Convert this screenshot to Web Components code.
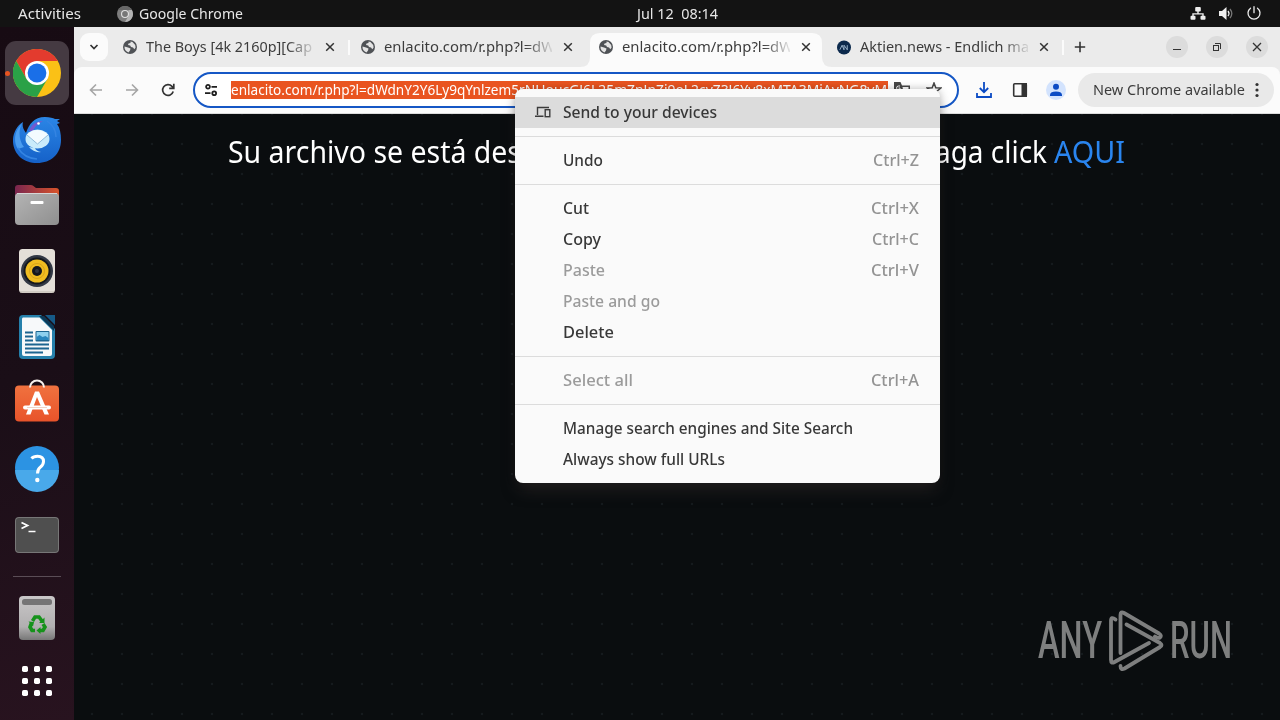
<!DOCTYPE html>
<html lang="en">
<head>
<meta charset="utf-8">
<title>Desktop</title>
<style>
  body {
    margin: 0;
    width: 1280px;
    height: 720px;
    overflow: hidden;
    font-family: "Noto Sans", "Open Sans", sans-serif;
    background: #131313;
  }
</style>
</head>
<body>
<desk-top></desk-top>

<script>
// one line of text, squeezed or stretched to the width in "w"
customElements.define(
  "fit-text",
  class extends HTMLElement {
    constructor() {
      super();
      this.attachShadow({ mode: "open" });
      // whitespace is kept by "pre", so no line breaks around the span
      this.shadowRoot.innerHTML =
        `<style>
        :host { display: block; flex: none; }
        span { display: inline-block; white-space: pre; transform-origin: 0 50%; vertical-align: top; }
        </style><span><slot></slot></span>`;
    }
    connectedCallback() {
      const w = Number(this.getAttribute("w"));
      const span = this.shadowRoot.querySelector("span");
      this.style.width = w + "px";
      const natural = span.getBoundingClientRect().width;
      if (natural) span.style.transform = `scaleX(${w / natural})`;
    }
  }
);

customElements.define(
  "top-bar",
  class extends HTMLElement {
    constructor() {
      super();
      this.attachShadow({ mode: "open" });
      this.shadowRoot.innerHTML = `
      <style>
        :host {
          display: flex;
          align-items: center;
          height: 27px;
          background: #131313;
          color: #e6e6e6;
          font-size: 14.3px;
          box-sizing: border-box;
          padding: 0 18px;
        }
        .app { display: flex; align-items: center; gap: 6px; margin-left: 36px; }
        .clock { margin-left: 394px; }
        .status { display: flex; align-items: center; gap: 12px; margin-left: auto; }
        svg { display: block; }
      </style>
      <fit-text w="63">Activities</fit-text>
      <div class="app">
        <svg width="16" height="16" viewBox="0 0 16 16">
          <circle cx="8" cy="8" r="8" fill="#7d7d7d"/>
          <path d="M1.1 4A8 8 0 0 1 14.9 4H8z" fill="#666"/>
          <path d="M14.9 4A8 8 0 0 1 8 16l3.5-6V4z" fill="#b4b4b4"/>
          <circle cx="8" cy="8" r="4" fill="#e2e2e2"/>
          <circle cx="8" cy="8" r="2.9" fill="#777"/>
        </svg>
        <fit-text w="104">Google Chrome</fit-text>
      </div>
      <fit-text class="clock" w="81">Jul 12  08:14</fit-text>
      <div class="status">
        <svg width="16" height="16" viewBox="0 0 16 16" fill="#eee">
          <rect x="5.2" y="1" width="5.6" height="4.500" rx="1"/>
          <rect x="0.5" y="9.700" width="5" height="4" rx="1"/>
          <rect x="10.5" y="9.700" width="5" height="4" rx="1"/>
          <path d="M7.3 5h1.4v2.2H13.700v2.700h-1.400V8.500H3.700v1.400H2.300V7.200h5z"/>
        </svg>
        <svg width="16" height="16" viewBox="0 0 16 16" fill="#eee">
          <path d="M1 5h3L8.500 1v13L4 10H1z"/>
          <path d="M10 5q2 2.500 0 5" stroke="#eee" stroke-width="1.300" fill="none"/>
          <path d="M12 3q3.600 4.500 0 9" stroke="#777" stroke-width="1.300" fill="none"/>
        </svg>
        <svg width="16" height="16" viewBox="0 0 16 16" fill="none" stroke="#eee" stroke-width="1.300" stroke-linecap="round">
          <path d="M4.500 2.200a6 6 0 1 0 7 0M8 .7v6"/>
        </svg>
      </div>`;
    }
  }
);

customElements.define(
  "dock-item",
  class extends HTMLElement {
    constructor() {
      super();
      this.attachShadow({ mode: "open" });
      this.shadowRoot.innerHTML = `
      <style>
        :host { display: flex; flex: none; align-items: center; justify-content: center; height: 66px; width: 74px; }
        div { display: flex; align-items: center; justify-content: center; width: 64px; height: 64px; border-radius: 11px; }
        :host([active]) div { background: #453a42; }
        :host([active]) div::before {
          content: "";
          width: 5px; height: 5px;
          border-radius: 50%;
          background: #e95420;
          margin: 0 3px 0 -8px;
        }
        ::slotted(svg) { display: block; width: 48px; height: 48px; flex: none; }
      </style>
      <div><slot></slot></div>`;
    }
  }
);

customElements.define(
  "side-dock",
  class extends HTMLElement {
    constructor() {
      super();
      this.attachShadow({ mode: "open" });
      this.shadowRoot.innerHTML = `
      <style>
        :host {
          display: flex;
          flex-direction: column;
          width: 74px;
          box-sizing: border-box;
          padding-top: 13px;
          background: linear-gradient(165deg, #170b13 0%, #1a0e17 50%, #28131f 100%);
        }
        hr { width: 48px; height: 1px; border: 0; margin: 8px auto; background: #5a4d56; flex: none; }
        .apps { height: 60px; }
      </style>
      <dock-item active><svg viewBox="0 0 48 48">
        <circle cx="24" cy="24" r="24" fill="#fbc116"/>
        <path d="M3.200 12A24 24 0 0 1 44.800 12H24L13.600 30z" fill="#e33b2e"/>
        <path d="M3.200 12A24 24 0 0 0 24 48L34.400 30 24 36 13.600 30z" fill="#2aa147"/>
        <circle cx="24" cy="24" r="12" fill="#fff"/>
        <circle cx="24" cy="24" r="9.400" fill="#1a6fe8"/>
      </svg></dock-item>
      <dock-item><svg viewBox="0 0 48 48">
        <defs>
          <linearGradient id="tb" x1="0" y1="0" x2="0" y2="1"><stop offset="0" stop-color="#2b86e6"/><stop offset="1" stop-color="#1561c8"/></linearGradient>
        </defs>
        <path d="M10 7C9 11 10 14 13 18 16 9 21 2 32 2c5 0 8 1 10 2h5l-3 2 3 2-3 1c3 4 4 10 4 16 0 14-10 23-24 23C11 48 1 40 0 27-.5 20 3 11 10 7z" fill="url(#tb)"/>
        <path d="M9 9C5 15 6 26 11 32L5 34C-1 25 3 14 9 9z" fill="#4b9df0"/>
        <path d="M16 16c2-6 7-10 14-10-5 3-8 5-10 10z" fill="#7459cf"/>
        <circle cx="25.500" cy="8.500" r="1.300" fill="#fff"/>
        <ellipse cx="24.500" cy="24" rx="12" ry="9.500" fill="#c9ebfb"/>
        <path d="M13.500 20Q24 10 35.500 20L24.500 29z" fill="#f3fbff"/>
        <path d="M14 20l10.500 9L35 20" fill="none" stroke="#8fbbda" stroke-width="1"/>
        <path d="M16 32q5 6 12 5-5-1-6-4z" fill="#bfe7fb"/>
        <path d="M34 6q9 6 9 16M5 33q6 10 19 11" stroke="#3484e2" stroke-width="1.500" fill="none"/>
      </svg></dock-item>
      <dock-item><svg viewBox="0 0 48 48">
        <defs>
          <linearGradient id="fo"><stop offset="0" stop-color="#79264f"/><stop offset="1" stop-color="#d9542b"/></linearGradient>
          <linearGradient id="fg" x1="0" y1="0" x2="1" y2="1"><stop offset="0" stop-color="#b4b4b4"/><stop offset="1" stop-color="#8f8f8f"/></linearGradient>
        </defs>
        <path d="M2 14V7q0-3 3-3h13q2 0 3 1.500L23 7h20q3 0 3 3v8H2z" fill="url(#fo)"/>
        <rect x="2" y="12" width="44" height="32" rx="4" fill="url(#fg)"/>
        <path d="M4 12.500h40" stroke="#d6d6d6" stroke-width="1"/>
        <rect x="17.500" y="20" width="13" height="3" rx="1" fill="#fff"/>
      </svg></dock-item>
      <dock-item><svg viewBox="0 0 48 48">
        <rect x="6" y="2" width="36" height="44" rx="3.500" fill="#e4dfd8"/>
        <path d="M7 45h34" stroke="#bdb7ae"/>
        <circle cx="24" cy="24" r="16" fill="#323844"/>
        <circle cx="24" cy="24" r="13.500" fill="#15181d"/>
        <circle cx="24" cy="24" r="11.500" fill="#f0bd20"/>
        <circle cx="24" cy="24" r="7.500" fill="none" stroke="#d9a51a"/>
        <circle cx="24" cy="24" r="5" fill="#15181d"/>
        <circle cx="24" cy="24" r="2" fill="#30353f"/>
      </svg></dock-item>
      <dock-item><svg viewBox="0 0 48 48">
        <path d="M10 2h18l14 14v26q0 4-4 4H10q-4 0-4-4V6q0-4 4-4z" fill="#2580ab"/>
        <path d="M32 2h10v10z" fill="#165a87"/>
        <path d="M10 4.500h16.500L39 17v24q0 2-2 2H11q-2 0-2-2V6.500q0-2 1-2z" fill="#f7f9fa"/>
        <path d="M26 3l15 15V13L31 3z" fill="#0c3a58"/>
        <path d="M12 19.500h8M12 23.500h8M12 27.500h8M12 31.500h24M12 35.500h24M12 39.500h18" stroke="#1c6590" stroke-width="1.800"/>
        <rect x="22.500" y="18" width="14" height="10.500" rx="1" fill="#1c6590"/>
        <path d="M23.500 19h12v8h-12z" fill="#8ed0ee"/>
        <path d="M23.500 27v-3l3-2 3 2 3-1 3 2v2z" fill="#2a86bd"/>
      </svg></dock-item>
      <dock-item><svg viewBox="0 0 48 48">
        <defs><linearGradient id="ba" x1="0" y1="0" x2="0" y2="1"><stop offset="0" stop-color="#f0723f"/><stop offset="1" stop-color="#e8532a"/></linearGradient></defs>
        <rect x="2" y="6.500" width="44" height="36" rx="4" fill="url(#ba)"/>
        <path d="M17 8.500a7 7 0 0 1 14 0" fill="none" stroke="#f5f0ec" stroke-width="2"/>
        <path d="M13 35.500L22 12.500h4L36 35.500h-4.500L24 18l-6.500 17.500z" fill="#fff"/>
        <rect x="10" y="26.500" width="28" height="4" rx="2" fill="#fff"/>
        <path d="M14 28.500h20" stroke="#e8b59f" stroke-width=".6"/>
      </svg></dock-item>
      <dock-item><svg viewBox="0 0 48 48">
        <circle cx="24" cy="23" r="22" fill="#2c93e3"/>
        <path d="M2 25a22 22 0 0 0 44 0z" fill="#49a9ea"/>
        <path d="M18.500 13.500q2-2.200 6-2.200 6 0 6 5.200 0 3-3 5.500-3 2-3 6.500" fill="none" stroke="#fff" stroke-width="3"/>
        <circle cx="24.300" cy="35" r="2.200" fill="#fff"/>
      </svg></dock-item>
      <dock-item><svg viewBox="0 0 48 48">
        <rect x="2" y="6" width="44" height="36" rx="4" fill="#777"/>
        <rect x="3" y="7" width="42" height="34" rx="3" fill="#4f4f4f"/>
        <path d="M8.500 11.500l6 3-6 3" fill="none" stroke="#fff" stroke-width="1.800"/>
        <path d="M15.500 20.500h7" stroke="#fff" stroke-width="1.500"/>
      </svg></dock-item>
      <hr>
      <dock-item><svg viewBox="0 0 48 48">
        <defs><linearGradient id="tr" x1="0" y1="0" x2="0" y2="1"><stop offset="0" stop-color="#c9c7c8"/><stop offset=".7" stop-color="#b1afb0"/><stop offset="1" stop-color="#777"/></linearGradient></defs>
        <rect x="6" y="2" width="36" height="44" rx="4" fill="url(#tr)"/>
        <rect x="9" y="5" width="30" height="6" rx="2.500" fill="#757475"/>
        <g fill="none" stroke="#16921b" stroke-width="3.600">
          <path d="M19.500 27l2.500-4h4l3 4"/>
          <path d="M18.500 29L17 33l2 3.500h3"/>
          <path d="M30 30l2 3-2 3.500h-4"/>
        </g>
        <path d="M31.500 23.500v5.500h-5.500zM15.500 27.500l5.500 .5-1 4.500zM27.500 33v7L23.500 36.500z" fill="#16921b"/>
      </svg></dock-item>
      <dock-item class="apps"><svg viewBox="0 0 48 48" fill="#fff">
        <rect x="9" y="9" width="6" height="6" rx="1.700"/><rect x="21" y="9" width="6" height="6" rx="1.700"/><rect x="33" y="9" width="6" height="6" rx="1.700"/>
        <rect x="9" y="21" width="6" height="6" rx="1.700"/><rect x="21" y="21" width="6" height="6" rx="1.700"/><rect x="33" y="21" width="6" height="6" rx="1.700"/>
        <rect x="9" y="33" width="6" height="6" rx="1.700"/><rect x="21" y="33" width="6" height="6" rx="1.700"/><rect x="33" y="33" width="6" height="6" rx="1.700"/>
      </svg></dock-item>`;
    }
  }
);

const GLOBE = `<svg width="14" height="14" viewBox="0 0 14 14">
  <circle cx="7" cy="7" r="7" fill="#4f5256"/>
  <path d="M1.500 6.500L5 7.500l2.500 1-.5 2-1.500 2C3 11.500 1.200 9.500 1.500 6.500z" fill="#e4e4e4"/>
  <path d="M7.500 1.400L9.500 2l2.700 3 .4 2.500-1.300 1.800-1.300-1.800-2-.5-.8-1.500L5 5l.5-1.500 2-.6z" fill="#e4e4e4"/>
</svg>`;

const NEWS = `<svg width="15" height="15" viewBox="0 0 15 15">
  <circle cx="7.500" cy="7.500" r="7.500" fill="#0c2a4d"/>
  <path d="M3 10l2.500-5L7.500 10V5l3.500 5V5" fill="none" stroke="#9fb8d0" stroke-width="1"/>
</svg>`;

customElements.define(
  "browser-tab",
  class extends HTMLElement {
    constructor() {
      super();
      this.attachShadow({ mode: "open" });
      this.shadowRoot.innerHTML = `
      <style>
        :host {
          display: flex;
          flex: none;
          align-items: center;
          position: relative;
          width: 238px;
          height: 40px;
          padding-left: 9px;
          box-sizing: border-box;
          color: #3c3c3c;
          font-size: 14.3px;
        }
        .back { display: none; }
        :host([active]) .back {
          display: block;
          position: absolute;
          left: -10px; top: 6px;
          z-index: 0;
        }
        .icon { width: 14px; height: 15px; display: flex; align-items: center; justify-content: center; flex: none; position: relative; }
        .title {
          position: relative;
          width: 168px;
          margin: -1px 0 0 9px;
          overflow: hidden;
          flex: none;
          -webkit-mask-image: linear-gradient(90deg, #000 84%, transparent 102%);
          mask-image: linear-gradient(90deg, #000 84%, transparent 102%);
        }
        .close { margin-left: 11px; position: relative; flex: none; }
        .rule { width: 2px; height: 15px; background: #fbfbfb; margin-left: 13px; }
        :host([norule]) .rule, :host([active]) .rule { visibility: hidden; }
      </style>
      <svg class="back" width="252" height="34" viewBox="0 0 252 34">
        <path d="M0 34Q10 34 10 24V10Q10 0 20 0H232Q242 0 242 10V24Q242 34 252 34z" fill="#fbfbfb"/>
      </svg>
      <div class="icon">${this.getAttribute("icon") == "news" ? NEWS : GLOBE}</div>
      <div class="title"><fit-text w="${this.getAttribute("w")}">${this.getAttribute("label")}</fit-text></div>
      <svg class="close" width="10" height="10" viewBox="0 0 10 10" stroke="#333" stroke-width="1.500"><path d="M1.200 1.200l7.600 7.600M8.800 1.200L1.200 8.800"/></svg>
      <div class="rule"></div>`;
    }
  }
);

customElements.define(
  "tab-strip",
  class extends HTMLElement {
    constructor() {
      super();
      this.attachShadow({ mode: "open" });
      this.shadowRoot.innerHTML = `
      <style>
        :host { display: flex; align-items: center; height: 40px; background: #ebebeb; box-sizing: border-box; padding: 0 12px 0 6px; }
        .search { width: 28px; height: 28px; margin-right: 6px; border-radius: 9px; background: #fbfbfb; display: flex; align-items: center; justify-content: center; flex: none; }
        .plus { flex: none; margin-left: 8px; }
        .win { display: flex; gap: 18px; margin-left: auto; }
        .win div { width: 22px; height: 22px; border-radius: 50%; background: #dcdcdc; display: flex; align-items: center; justify-content: center; }
        svg { display: block; }
      </style>
      <div class="search"><svg width="10" height="6" viewBox="0 0 10 6" fill="none" stroke="#333" stroke-width="1.700"><path d="M1.500 1L5 4.500 8.500 1"/></svg></div>
      <browser-tab label="The Boys [4k 2160p][Cap" w="166"></browser-tab>
      <browser-tab label="enlacito.com/r.php?l=dW" w="171" norule></browser-tab>
      <browser-tab label="enlacito.com/r.php?l=dW" w="171" active></browser-tab>
      <browser-tab label="Aktien.news - Endlich ma" w="169" icon="news"></browser-tab>
      <svg class="plus" width="12" height="12" viewBox="0 0 12 12" stroke="#333" stroke-width="1.600"><path d="M6 .8v10.400M.8 6h10.400"/></svg>
      <div class="win">
        <div><svg width="10" height="10" viewBox="0 0 10 10" stroke="#333" stroke-width="1"><path d="M1 7.500h8"/></svg></div>
        <div><svg width="10" height="10" viewBox="0 0 10 10" fill="none" stroke="#333" stroke-width="1"><rect x="1.500" y="3.500" width="5" height="5"/><path d="M3 1.500h5.500V7"/></svg></div>
        <div><svg width="10" height="10" viewBox="0 0 10 10" stroke="#333" stroke-width="1.300"><path d="M1 1l8 8M9 1L1 9"/></svg></div>
      </div>`;
    }
  }
);

customElements.define(
  "tool-bar",
  class extends HTMLElement {
    constructor() {
      super();
      this.attachShadow({ mode: "open" });
      this.shadowRoot.innerHTML = `
      <style>
        :host { display: block; background: #ebebeb; font-size: 14.3px; color: #3c3c3c; }
        .bar {
          display: flex;
          align-items: center;
          height: 47px;
          box-sizing: border-box;
          padding: 0 6px 1px 14px;
          background: #fbfbfb;
          border-radius: 8px 8px 0 0;
          border-bottom: 1px solid #dcdcdc;
        }
        svg { display: block; flex: none; }
        nav { display: flex; gap: 20px; }
        .omni {
          display: flex;
          align-items: center;
          width: 766px;
          height: 36px;
          margin-left: 17px;
          box-sizing: border-box;
          border: 2px solid #1557c5;
          border-radius: 18px;
          background: #fff;
          padding-left: 9px;
        }
        .url { display: flex; align-items: center; height: 18px; width: 657px; margin: 0 6px 0 13px; background: #e95420; color: #fff; font-size: 14.3px; line-height: 18px; }
        .omni .star { margin-left: 16px; }
        .acts { display: flex; align-items: center; gap: 16px; margin-left: 15px; }
        .pill { display: flex; align-items: center; width: 196px; height: 34px; border-radius: 17px; background: #e9e9e9; margin-left: auto; box-sizing: border-box; padding-left: 15px; }
        .pill svg { margin-left: 10px; }
      </style>
      <div class="bar">
        <nav>
          <svg width="16" height="16" viewBox="0 0 16 16" fill="none" stroke="#a5a5a5" stroke-width="1.600"><path d="M14 8H3M8 2.500L2.500 8 8 13.500"/></svg>
          <svg width="16" height="16" viewBox="0 0 16 16" fill="none" stroke="#a5a5a5" stroke-width="1.600"><path d="M2 8h11M8 2.500L13.500 8 8 13.500"/></svg>
          <svg width="16" height="16" viewBox="0 0 16 16" fill="none" stroke="#333" stroke-width="1.700"><path d="M13.200 9.500A5.400 5.400 0 1 1 12 4.300l1.500 1.500M13.800 1.700v4.600H9.200"/></svg>
        </nav>
        <div class="omni">
          <svg width="14" height="14" viewBox="0 0 14 14" fill="none" stroke="#1f1f1f" stroke-width="1.800"><circle cx="4" cy="3.800" r="1.900"/><path d="M7.500 3.800H13M1 10.200h5.500"/><circle cx="10.200" cy="10.200" r="1.900"/></svg>
          <div class="url"><fit-text w="288">enlacito.com/r.php?l=dWdnY2Y6Ly9qYnlzem5</fit-text><fit-text w="368">rNHoucGJ6L25mZnJnZi9oL2cyZ3J6Yy8xMTA3MjAyNG8yM</fit-text></div>
          <svg width="16" height="16" viewBox="0 0 16 16"><path d="M0 0h6.500l1.500 3.500H16V15H9L8 12H0z" fill="#474747"/><path d="M8.500 5h6v8.500H10z" fill="#fff"/><path d="M6 4H4.500a2 2 0 1 0 .2 4H6V6H4.500" stroke="#fff" fill="none"/></svg>
          <svg class="star" width="16" height="16" viewBox="0 0 16 16" fill="none" stroke="#474747" stroke-width="1.500"><path d="M8 1l1.800 4.700 5 .3-3.900 3.200 1.300 4.800L8 11.300l-4.200 2.700 1.300-4.800L1.200 6l5-.3z"/></svg>
        </div>
        <div class="acts">
          <svg style="margin-left:2px" width="16" height="16" viewBox="0 0 16 16" fill="none" stroke="#0b4bc4" stroke-width="1.800"><path d="M8 0v10M3.800 6L8 10.200 12.200 6M1 11v4h14v-4"/></svg>
          <svg style="margin-left:4px" width="16" height="16" viewBox="0 0 16 16"><rect x="1.700" y="1.700" width="12.600" height="12.600" rx="1" fill="none" stroke="#333" stroke-width="1.600"/><path d="M9.500 1h5.500v14H9.500z" fill="#333"/></svg>
          <svg style="margin-left:2px" width="20" height="20" viewBox="0 0 20 20"><circle cx="10" cy="10" r="10" fill="#d3e3fd"/><circle cx="10" cy="6.800" r="3" fill="#0b4bc4"/><path d="M4 16v-1.500Q4.500 11.500 10 11.500t6 3V16z" fill="#0b4bc4"/></svg>
        </div>
        <div class="pill">
          <fit-text w="152">New Chrome available</fit-text>
          <svg width="4" height="16" viewBox="0 0 4 16" fill="#333"><circle cx="2" cy="2.500" r="1.600"/><circle cx="2" cy="8" r="1.600"/><circle cx="2" cy="13.500" r="1.600"/></svg>
        </div>
      </div>`;
    }
  }
);

customElements.define(
  "web-page",
  class extends HTMLElement {
    constructor() {
      super();
      this.attachShadow({ mode: "open" });
      this.shadowRoot.innerHTML = `
      <style>
        :host {
          display: block;
          flex: 1;
          position: relative;
          background-color: #0a0d0f;
          background-image: radial-gradient(circle, #1c2226 0, #12171a 1px, transparent 1.6px);
          background-size: 30px 30px;
          background-position: 3px 15px;
        }
        p { display: flex; margin: 0; padding: 17px 0 0 154px; font-size: 30px; line-height: 41px; color: #fff; }
        .rest { margin-left: 414px; }
        .link { margin-left: 7px; color: #2a85ef; }
        /* watermark over the page corner */
        .mark { position: absolute; right: 48px; bottom: 46px; display: flex; align-items: center; height: 66px; color: #7e7f7f; font: 500 52px/66px Roboto, sans-serif; }
        .mark svg { margin: 0 6px 0 7px; flex: none; }
      </style>
      <p><fit-text w="293">Su archivo se está des</fit-text><fit-text class="rest" w="112">aga click</fit-text><fit-text class="link" w="71">AQUI</fit-text></p>
      <div class="mark">
        <fit-text w="64">ANY</fit-text>
        <svg width="55" height="62" viewBox="0 0 55 62" fill="none" stroke="#7e7f7f" stroke-width="3.800" stroke-linecap="round" stroke-linejoin="round">
          <path d="M6.500 9.500Q2 6 2 11v39q0 4 3.500 2L40 33"/>
          <path d="M11.500 43V5q0-4 3.500-2l35 20.500q3 2 1 4-2 1-5-1"/>
          <path d="M17.500 14.500L51 33q3 2 0 4L15.500 58.500q-4 2-4-2.500"/>
        </svg>
        <fit-text w="62">RUN</fit-text>
      </div>`;
    }
  }
);

customElements.define(
  "menu-item",
  class extends HTMLElement {
    constructor() {
      super();
      this.attachShadow({ mode: "open" });
      const keys = this.getAttribute("keys");
      this.shadowRoot.innerHTML = `
      <style>
        :host { display: flex; align-items: center; height: 31px; box-sizing: border-box; padding: 0 21px 2px 20px; color: #383838; }
        :host([hover]) { background: #dcdcdc; }
        :host([disabled]) { color: #9b9b9b; }
        .icon { width: 16px; height: 16px; margin-right: 12px; }
        .keys { margin-left: auto; color: #939393; }
      </style>
      <div class="icon"><slot></slot></div>
      <fit-text w="${this.getAttribute("w")}">${this.getAttribute("label")}</fit-text>
      ${keys ? `<fit-text class="keys" w="${this.getAttribute("kw")}">${keys}</fit-text>` : ""}`;
    }
  }
);

customElements.define(
  "context-menu",
  class extends HTMLElement {
    constructor() {
      super();
      this.attachShadow({ mode: "open" });
      this.shadowRoot.innerHTML = `
      <style>
        :host {
          display: block;
          width: 425px;
          height: 394px;
          box-sizing: border-box;
          padding: 8px 0;
          border-radius: 8px;
          background: #fafafa;
          font-size: 15.500px;
          font-weight: 550;
          box-shadow: 0 10px 16px -4px rgba(60, 50, 48, .5), 0 0 8px rgba(0, 0, 0, .25);
        }
        hr { height: 1px; margin: 8px 0; border: 0; background: #dcdcdc; }
        svg { display: block; }
      </style>
      <menu-item hover label="Send to your devices" w="154">
        <svg width="16" height="16" viewBox="0 0 16 16" fill="none" stroke="#3b3b3b" stroke-width="1.400"><path d="M2.500 11V3.500H14M0 12.300h8.500"/><rect x="10.200" y="5.700" width="4.600" height="7"/></svg>
      </menu-item>
      <hr>
      <menu-item label="Undo" w="40" keys="Ctrl+Z" kw="46"></menu-item>
      <hr>
      <menu-item label="Cut" w="26" keys="Ctrl+X" kw="48"></menu-item>
      <menu-item label="Copy" w="38" keys="Ctrl+C" kw="47"></menu-item>
      <menu-item disabled label="Paste" w="42" keys="Ctrl+V" kw="48"></menu-item>
      <menu-item disabled label="Paste and go" w="97"></menu-item>
      <menu-item label="Delete" w="51"></menu-item>
      <hr>
      <menu-item disabled label="Select all" w="70" keys="Ctrl+A" kw="48"></menu-item>
      <hr>
      <menu-item label="Manage search engines and Site Search" w="290"></menu-item>
      <menu-item label="Always show full URLs" w="162"></menu-item>`;
    }
  }
);

customElements.define(
  "desk-top",
  class extends HTMLElement {
    constructor() {
      super();
      this.attachShadow({ mode: "open" });
      this.shadowRoot.innerHTML = `
      <style>
        :host { display: flex; flex-direction: column; position: relative; width: 1280px; height: 720px; overflow: hidden; }
        main { display: flex; flex: 1; min-height: 0; }
        section { display: flex; flex-direction: column; flex: 1; min-width: 0; }
        context-menu { position: absolute; left: 515px; top: 89px; }
      </style>
      <top-bar></top-bar>
      <main>
        <side-dock></side-dock>
        <section>
          <tab-strip></tab-strip>
          <tool-bar></tool-bar>
          <web-page></web-page>
        </section>
      </main>
      <context-menu></context-menu>`;
    }
  }
);
</script>
</body>
</html>
